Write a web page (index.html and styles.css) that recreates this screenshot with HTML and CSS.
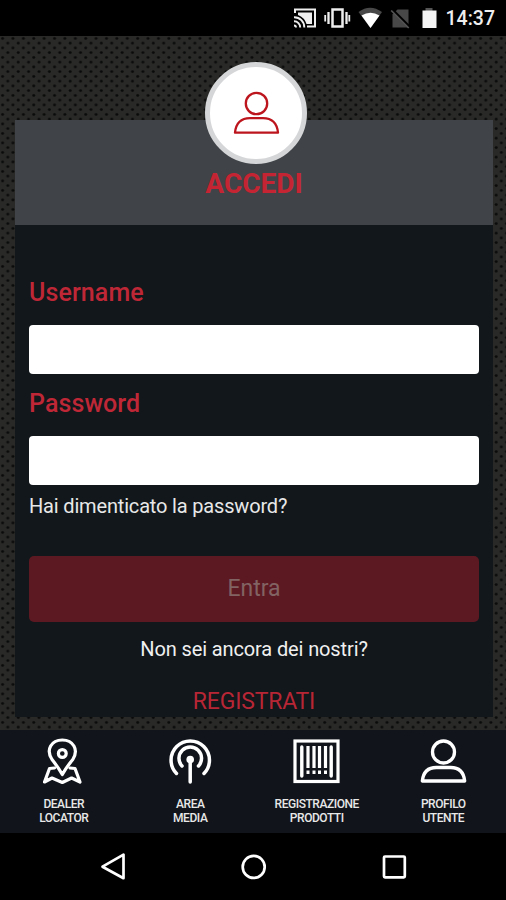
FILE: index.html
```html
<!DOCTYPE html>
<html lang="it">
<head>
<meta charset="utf-8">
<title>Accedi</title>
<link rel="stylesheet" href="styles.css">
</head>
<body>
<div class="phone">
  <header class="status">
    <svg class="status-icons" width="146" height="36" viewBox="292 0 146 36">
      <g fill="none" stroke="#eee" stroke-width="2">
        <path d="M295 13v-3.500h20v17h-8"/>
        <path d="M294 25.500a2 2 0 0 1 2 2M294 21.300a6 6 0 0 1 6.200 6.200M294 17.200a10 10 0 0 1 10.300 10.300" stroke-width="1.900"/>
        <rect x="332.500" y="9.500" width="10" height="17" stroke-width="2.500"/>
        <path d="M328.500 12v12M346.500 12v12" stroke-width="2.300"/>
        <path d="M325.200 15v6.500M349.300 15v6.500" stroke-width="1.800"/>
      </g>
      <path d="M298 12.500h14v11.500h-5.500q-2-6.500-8.500-9z" fill="#eee"/>
      <path d="M358.500 12q11.500-8.500 23.500 0L370.500 28z" fill="#484848"/>
      <path d="M361.500 15.500q9-5.500 18 0L370.500 28z" fill="#fff"/>
      <path d="M397.500 9.500h11v18h-16V14.500z" fill="#484848"/>
      <path d="M391.500 9l19 19" stroke="#000" stroke-width="3"/>
      <path d="M391.200 10.500l17.500 17.500" stroke="#555" stroke-width="1.700"/>
      <path d="M425.500 8h7v3h-7z" fill="#555"/>
      <path d="M422.500 10.500h14V28h-14z" fill="#f4f4f4"/>
    </svg>
    <span class="clock">14:37</span>
  </header>
  <main class="content">
    <section class="card">
      <div class="card-head">
        <div class="avatar">
          <svg width="48" height="46" viewBox="0 0 48 46" fill="none" stroke="#bd151d" stroke-width="2.300" stroke-linejoin="round">
            <circle cx="24.500" cy="13.500" r="10.700"/>
            <path d="M3 42.700h43q-1.500-14.500-15-14.500H18Q4.500 28.200 3 42.700z"/>
          </svg>
        </div>
        <h1 class="title">ACCEDI</h1>
      </div>
      <form class="form">
        <label class="label" for="user">Username</label>
        <input class="field" id="user" type="text">
        <label class="label label-pass" for="pass">Password</label>
        <input class="field" id="pass" type="password">
        <a class="forgot">Hai dimenticato la password?</a>
        <button class="submit" type="button">Entra</button>
        <p class="question">Non sei ancora dei nostri?</p>
        <a class="register">REGISTRATI</a>
      </form>
    </section>
  </main>
  <nav class="tabs">
    <a class="tab">
      <svg width="50" height="50" viewBox="38 737 50 50" fill="none" stroke="#fff" stroke-width="3.200" stroke-linejoin="round" stroke-linecap="round">
        <path d="M62.300 774.500Q58 767 52 759.500C45.500 749.500 51.500 740 62.300 740S79 749.500 72.800 759.500Q66.500 767 62.300 774.500z"/>
        <circle cx="62.300" cy="753.500" r="3.900"/>
        <path d="M54.500 768l-5 .5-5 13.500 7.500-4 10.300 4.500 9.300-4.500 8.400 4-5-13.500-5-.5"/>
      </svg>
      <span>DEALER<br>LOCATOR</span>
    </a>
    <a class="tab">
      <svg width="50" height="50" viewBox="165 737 50 50" fill="none" stroke="#fff" stroke-width="3.500" stroke-linecap="round">
        <path d="M176.500 773.500a19.200 19.200 0 1 1 27.500 0M182 766a11.300 11.300 0 1 1 16.500 0M190.200 760v22"/>
        <circle cx="190.200" cy="759.500" r="3.800" fill="#fff" stroke="none"/>
      </svg>
      <span>AREA<br>MEDIA</span>
    </a>
    <a class="tab">
      <svg width="50" height="50" viewBox="291.500 737 50 50" fill="none" stroke="#fff">
        <rect x="295.500" y="741" width="43" height="40.500" stroke-width="3.200"/>
        <path d="M302.300 747v29M331.700 747v29" stroke-width="3.400" stroke-linecap="round"/>
        <path d="M308.500 746v22M314.500 746v22M320 746v22M326 746v22" stroke-width="3.200"/>
        <path d="M308.500 770.500v3.500M314.500 770.500v3.500M320 770.500v3.500M326 770.500v3.500" stroke-width="3"/>
      </svg>
      <span>REGISTRAZIONE<br>PRODOTTI</span>
    </a>
    <a class="tab">
      <svg width="50" height="50" viewBox="418 737 50 50" fill="none" stroke="#fff" stroke-width="3.300" stroke-linejoin="round">
        <circle cx="443.500" cy="752" r="11"/>
        <path d="M422.300 781h42.400q-1.500-13.500-14-13.500h-14.400q-12.500 0-14 13.500z"/>
      </svg>
      <span>PROFILO<br>UTENTE</span>
    </a>
  </nav>
  <footer class="system">
    <svg width="506" height="67" viewBox="0 833 506 67" fill="none" stroke="#fff" stroke-width="2.700" stroke-linejoin="round">
      <path d="M102.500 866.700L123.500 854.700v23.500z"/>
      <circle cx="253.700" cy="866.900" r="11"/>
      <rect x="384" y="856.500" width="20.800" height="20.800" rx="1"/>
    </svg>
  </footer>
</div>
</body>
</html>
```
FILE: styles.css
```css
* { box-sizing: border-box; }
body {
  margin: 0;
  background: #000;
  font-family: Roboto, "Liberation Sans", sans-serif;
}
.phone {
  display: flex;
  flex-direction: column;
  width: 506px;
  height: 900px;
  overflow: hidden;
}
.status {
  display: flex;
  align-items: center;
  justify-content: flex-end;
  gap: 8px;
  flex: 0 0 36px;
  padding-right: 11px;
  background: #000;
}
.clock {
  padding-top: 2px;
  color: #eee;
  font-size: 19.5px;
  font-weight: 500;
  line-height: 34px;
}
.content {
  flex: 0 0 694px;
  padding: 84px 13px 13px 15px;
  background-color: #292a27;
  background-image:
    radial-gradient(ellipse 2px 1.6px at 2.600px 2.400px, #080909 50%, transparent),
    radial-gradient(ellipse 2px 1.6px at 7.800px 7.100px, #080909 50%, transparent);
  background-size: 10.400px 9.500px;
}
.card {
  height: 597px;
  background: #11171b;
}
.card-head {
  display: flex;
  flex-direction: column;
  align-items: center;
  height: 105px;
  background: #404448;
}
.avatar {
  display: flex;
  align-items: center;
  justify-content: center;
  flex: none;
  width: 102px;
  height: 102px;
  margin-top: -58px;
  margin-left: 4px;
  border: 5px solid #d5d6d8;
  border-radius: 50%;
  background: #fff;
}
.title {
  margin: 4px 0 0;
  color: #c52532;
  font-size: 28px;
  font-weight: 700;
  line-height: 32px;
}
.form {
  display: flex;
  flex-direction: column;
  padding: 52px 14px 0;
}
.label {
  color: #bf2737;
  font-size: 25px;
  font-weight: 500;
  line-height: 32px;
  letter-spacing: 0.1px;
}
.label-pass { margin-top: 14px; }
.field {
  height: 49px;
  margin: 15.500px 0 0;
  padding: 0 12px;
  border: 0;
  border-radius: 4px;
  background: #fff;
}
.label-pass + .field { margin-top: 16.500px; }
.forgot {
  margin-top: 7.500px;
  color: #e8e8e8;
  font-size: 20px;
  line-height: 26px;
  letter-spacing: -0.170px;
}
.submit {
  height: 66px;
  margin: 37.500px 0 0;
  padding: 0;
  border: 0;
  border-radius: 5px;
  background: #5d1922;
  color: #826363;
  font: 400 23px/66px Roboto, sans-serif;
}
.question {
  margin: 14px 0 0;
  color: #f0f0f0;
  font-size: 20px;
  line-height: 26px;
  letter-spacing: -0.120px;
  text-align: center;
}
.register {
  margin-top: 25px;
  color: #b72635;
  font-size: 23px;
  line-height: 30px;
  letter-spacing: -0.200px;
  text-align: center;
}
.tabs {
  display: grid;
  grid-template-columns: repeat(4, 1fr);
  flex: 0 0 103px;
  background: #11151b;
}
.tab {
  display: flex;
  flex-direction: column;
  align-items: center;
  padding-top: 7px;
  color: #e8e8e8;
  font-size: 12px;
  font-weight: 500;
  line-height: 14px;
  letter-spacing: -0.450px;
  text-align: center;
}
.tab span { margin-top: 10px; padding-left: 1px; }
.system {
  flex: 0 0 67px;
  background: #000;
}
```
